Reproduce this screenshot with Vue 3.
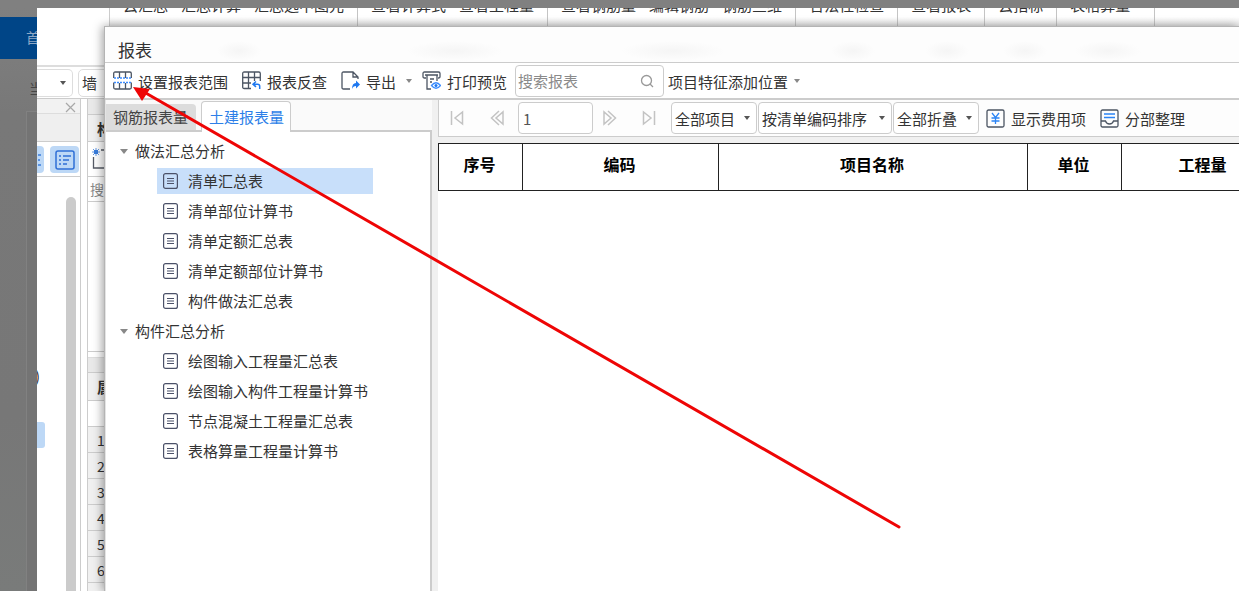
<script setup>
import { ref } from 'vue'

const ribbon = [
  ['云汇总', '汇总计算', '汇总选中图元'],
  ['查看计算式', '查看工程量'],
  ['查看钢筋量', '编辑钢筋', '钢筋三维'],
  ['合法性检查'],
  ['查看报表'],
  ['云指标'],
  ['表格算量'],
]
const tree = [
  { name: '做法汇总分析', items: ['清单汇总表', '清单部位计算书', '清单定额汇总表', '清单定额部位计算书', '构件做法汇总表'] },
  { name: '构件汇总分析', items: ['绘图输入工程量汇总表', '绘图输入构件工程量计算书', '节点混凝土工程量汇总表', '表格算量工程量计算书'] },
]
const selected = ref('清单汇总表')
const page = ref('1')
const keyword = ref('')
const rows = [1, 2, 3, 4, 5, 6, 7]
</script>

<template>
  <div class="screen">
    <aside class="backdrop">
      <div class="nav">首页</div>
      <div class="crumb">当前</div>
      <div class="card"></div>
    </aside>

    <main class="viewer">
      <div class="ribbon">
        <div v-for="(group, i) in ribbon" :key="i" class="ribbon-group">
          <span v-for="label in group" :key="label">{{ label }}</span>
        </div>
      </div>

      <div class="workspace">
        <div class="type-bar">
          <button class="type-box first" aria-label="楼层"><i class="caret"></i></button>
          <button class="type-box second">墙</button>
        </div>
        <div class="docks">
          <section class="dock">
            <div class="dock-head">
              <button class="close" aria-label="关闭">
                <svg width="11" height="11" viewBox="0 0 11 11"><path d="M1 1l9 9M10 1l-9 9" stroke="#a8a8a8" stroke-width="1.2" fill="none" /></svg>
              </button>
            </div>
            <div class="dock-gap"></div>
            <div class="dock-tools">
              <button class="chip cut" aria-label="图标视图">
                <svg width="6" height="20" viewBox="0 0 6 20"><path d="M0 5h3M0 10h2M0 15h3" stroke="#3b7ddd" stroke-width="1.5" /></svg>
              </button>
              <button class="chip" aria-label="列表视图">
                <svg width="20" height="20" viewBox="0 0 20 20" fill="none" stroke="#2f6fd6" stroke-width="1.5">
                  <rect x="1" y="1" width="18" height="18" rx="2" />
                  <path d="M4 6h2M8 6h8M4 10h2M8 10h6M4 14h2M8 14h4" />
                </svg>
              </button>
            </div>
            <div class="dock-list">
              <div class="list-col">
                <span class="paren">)</span>
                <span class="mark"></span>
              </div>
              <div class="scroll"></div>
            </div>
          </section>

          <section class="props">
            <div class="strip top"></div>
            <div class="cell head">构</div>
            <div class="cell tool">
              <svg width="16" height="22" viewBox="0 0 16 22" fill="none">
                <path d="M1.500 9v11H16M9 2h7" stroke="#555b66" stroke-width="1.3" />
                <rect x="2" y="2" width="4" height="4" fill="#3b7ddd" />
                <path d="M1 1l6 6M7 1L1 7M4 0v8M0 4h8" stroke="#3b7ddd" stroke-width=".8" />
              </svg>
            </div>
            <div class="cell find">搜</div>
            <div class="cell empty"></div>
            <div class="strip bottom"></div>
            <div class="cell attr">属</div>
            <div class="cell blank"></div>
            <div v-for="n in rows" :key="n" class="cell num">{{ n }}</div>
          </section>
        </div>
      </div>

      <section class="dialog" aria-labelledby="dialog-title">
        <h1 id="dialog-title" class="title">报表</h1>

        <div class="toolbar">
          <button class="tool-btn">
            <svg width="19" height="19" viewBox="0 0 19 19" fill="none">
              <path d="M.7 7V2.500Q.7 1 2.200 1h14.600q1.500 0 1.500 1.500V7M6.500 1v6M12.500 1v6M.7 11.500v5Q.7 18 2.200 18h14.600q1.500 0 1.500-1.500v-5M6.500 12v6M12.500 12v6" stroke="#4c5563" stroke-width="1.300" />
              <path d="M1 7h17M1 11.500h17" stroke="#3b8cff" stroke-width="1.300" stroke-dasharray="2 1" />
            </svg>
            <span>设置报表范围</span>
          </button>
          <button class="tool-btn">
            <svg width="19" height="19" viewBox="0 0 19 19" fill="none">
              <path d="M9 17.500H2.200Q.7 17.500.7 16V2.500Q.7 1 2.200 1h14.600q1.500 0 1.500 1.500V10M.7 6.500h17.600M.7 12H9M6.500 1v16.500M12.500 1v9" stroke="#4c5563" stroke-width="1.300" />
              <path d="M14 10.500l-3 2.700 3 2.700M11 13.200h4.500q2.200 0 2.200 2V18" stroke="#1e78f0" stroke-width="1.500" />
            </svg>
            <span>报表反查</span>
          </button>
          <button class="tool-btn">
            <svg width="19" height="19" viewBox="0 0 19 19" fill="none">
              <path d="M9 18H2.500Q1 18 1 16.500v-14Q1 1 2.500 1H12l5 5v2M12 1v5h5" stroke="#4c5563" stroke-width="1.300" />
              <path d="M11 18q0-6 4-6V9.500l4 4-4 4V15q-3 0-4 3z" fill="#1e78f0" />
            </svg>
            <span>导出</span>
            <i class="caret pale"></i>
          </button>
          <button class="tool-btn">
            <svg width="19" height="19" viewBox="0 0 19 19" fill="none">
              <path d="M4 7H2.500Q1 7 1 5.500v-3Q1 1 2.500 1h14Q18 1 18 2.500v3Q18 7 16.500 7H16M3 4h13M5 4v14h4M15 4v6M8 8h4M8 11h2" stroke="#4c5563" stroke-width="1.300" />
              <path d="M9.500 14.500q4.500-5.500 9 0-4.500 5.500-9 0z" stroke="#3b8cff" stroke-width="1.300" />
              <circle cx="14" cy="14.500" r="1.500" fill="#1e78f0" />
            </svg>
            <span>打印预览</span>
          </button>
          <label class="search">
            <input v-model="keyword" type="text" placeholder="搜索报表" aria-label="搜索报表" />
            <svg width="14" height="14" viewBox="0 0 14 14" fill="none" stroke="#999" stroke-width="1.300"><circle cx="6.500" cy="6.500" r="5" /><path d="M10 10l3 3" /></svg>
          </label>
          <button class="tool-btn feature"><span>项目特征添加位置</span><i class="caret pale"></i></button>
        </div>

        <div class="body">
          <aside class="side">
            <div class="tabs">
              <button class="tab">钢筋报表量</button>
              <button class="tab active">土建报表量</button>
            </div>
            <ul class="tree">
              <li v-for="g in tree" :key="g.name">
                <button class="branch"><i class="fold"></i>{{ g.name }}</button>
                <ul>
                  <li v-for="item in g.items" :key="item" class="entry">
                    <button class="leaf" :class="{ on: item === selected }" @click="selected = item">
                      <svg width="15" height="16" viewBox="0 0 15 16" fill="none" stroke="#4b5168" stroke-width="1.200">
                        <rect x=".6" y=".6" width="13.800" height="14.800" rx="2" />
                        <path d="M4 5.500h7M4 8h7M4 10.500h7" />
                      </svg>
                      {{ item }}
                    </button>
                  </li>
                </ul>
              </li>
            </ul>
          </aside>

          <div class="report">
            <div class="pager">
              <button class="step" aria-label="首页"><svg width="14" height="16" viewBox="0 0 14 16"><path d="M1.500 1v14M12.500 2v12L5 8z" /></svg></button>
              <button class="step" aria-label="上一页"><svg width="14" height="16" viewBox="0 0 14 16"><path d="M9 1L1.500 8 9 15M13 2v12L6 8z" /></svg></button>
              <input v-model="page" class="page" type="text" aria-label="页码" />
              <button class="step" aria-label="下一页"><svg width="14" height="16" viewBox="0 0 14 16"><path d="M5 1l7.500 7L5 15M1 2v12l7-6z" /></svg></button>
              <button class="step" aria-label="末页"><svg width="14" height="16" viewBox="0 0 14 16"><path d="M12.500 1v14M1.500 2v12L9 8z" /></svg></button>
              <div class="picks">
                <span class="pick"><select aria-label="项目"><option>全部项目</option></select><i class="caret"></i></span>
                <span class="pick wide"><select aria-label="排序"><option>按清单编码排序</option></select><i class="caret"></i></span>
                <span class="pick"><select aria-label="折叠"><option>全部折叠</option></select><i class="caret"></i></span>
              </div>
              <button class="tool-btn">
                <svg width="19" height="19" viewBox="0 0 19 19" fill="none">
                  <rect x="1" y="1" width="17" height="17" rx="1.500" stroke="#4c5563" stroke-width="1.300" />
                  <path d="M6 4l3.500 4.500L13 4M9.500 8.500V15M5.500 9h8M5.500 12h8" stroke="#2b84f5" stroke-width="1.300" />
                </svg>
                <span>显示费用项</span>
              </button>
              <button class="tool-btn">
                <svg width="19" height="19" viewBox="0 0 19 19" fill="none">
                  <rect x="1" y="1" width="17" height="17" rx="1.500" stroke="#4c5563" stroke-width="1.300" />
                  <path d="M1 12h4.500q1 3 4 3t4-3H18" stroke="#4c5563" stroke-width="1.300" />
                  <path d="M4 5h11M4 8.500h11" stroke="#2b84f5" stroke-width="1.300" />
                </svg>
                <span>分部整理</span>
              </button>
            </div>
            <div class="sheet">
              <table>
                <colgroup><col class="c1" /><col class="c2" /><col class="c3" /><col class="c4" /><col class="c5" /></colgroup>
                <thead>
                  <tr><th>序号</th><th>编码</th><th>项目名称</th><th>单位</th><th>工程量</th></tr>
                </thead>
              </table>
            </div>
          </div>
        </div>
      </section>
    </main>

    <svg class="arrow" width="780" height="460" viewBox="0 0 780 460">
      <path d="M15 11L770 446" stroke="#ee0505" stroke-width="3" stroke-linecap="round" />
      <path d="M4 6L21 8 13 20z" fill="#ee0505" />
    </svg>
  </div>
</template>

<style>
body { margin: 0; overflow: hidden; }
</style>

<style scoped>
* { box-sizing: border-box; }
.screen {
  position: relative;
  display: grid;
  grid-template-columns: 37px 1fr;
  height: 100vh;
  padding-top: 8px;
  overflow: hidden;
  background: #808080;
  color: #333;
  font: 15px/20px "Noto Sans CJK SC", "Liberation Sans", sans-serif;
}
button, input, select { font: inherit; color: inherit; margin: 0; padding: 0; border: 0; background: none; white-space: nowrap; }
svg { display: block; flex: none; }
ul { list-style: none; margin: 0; padding: 0; }

.backdrop { display: flex; flex-direction: column; overflow: hidden; white-space: nowrap; background: linear-gradient(#808080, #787878 18%, #777 70%, #797b7a); }
.nav { margin-top: 9px; height: 42px; padding-left: 26px; line-height: 40px; font-size: 14px; color: #8fa9c6; background: #004587; }
.crumb { padding: 19px 0 0 29px; font-size: 14px; color: #454545; }
.card { flex: 1; margin: 13px 0 0 26px; border: solid #818181; border-width: 1px 0 0 1px; background: #747474; }

.viewer { position: relative; display: flex; flex-direction: column; min-width: 0; overflow: hidden; background: #fff; }
.ribbon { display: flex; height: 18px; margin-left: 72px; border-left: 1px solid #ccc; background: linear-gradient(#fff 50%, #e6e6e6); white-space: nowrap; flex: none; }
.ribbon-group { display: flex; align-items: flex-end; gap: 13px; height: 18px; padding: 0 13px 11px; border-right: 1px solid #c4c4c4; overflow: hidden; }
.ribbon-group:last-child { padding-right: 24px; }
.ribbon-group span { flex: none; }

.workspace { flex: 1; display: flex; flex-direction: column; width: 67px; margin-top: 39px; border-top: 2px solid #ddd; overflow: hidden; }
.type-bar { display: flex; gap: 5px; height: 31px; padding: 2px 0; }
.type-box { flex: none; height: 28px; border: 1px solid #ddd; background: #fff; }
.type-box.first { width: 36px; border-left: 0; border-radius: 0 5px 5px 0; display: flex; align-items: center; justify-content: flex-end; padding-right: 6px; }
.type-box.second { width: 60px; border-radius: 5px; padding-left: 3px; text-align: left; }
.caret { display: block; flex: none; width: 0; height: 0; border: solid transparent; border-width: 4px 3px 0; border-top-color: #555; }
.caret.pale { border-top-color: #888; }
.docks { flex: 1; display: flex; gap: 6px; min-height: 0; border-top: 1px solid #ccc; }
.dock { display: flex; flex-direction: column; width: 44px; border-right: 1px solid #ccc; flex: none; }
.dock-head { display: flex; justify-content: flex-end; height: 15px; padding: 3px 4px 0; background: #f2f2f2; border-bottom: 1px solid #ddd; }
.dock-gap { height: 28px; background: #efefef; border-bottom: 1px solid #ccc; }
.dock-tools { display: flex; gap: 6px; height: 35px; padding: 4px 0; border-bottom: 1px solid #ccc; }
.chip { display: flex; align-items: center; justify-content: center; width: 29px; height: 27px; border-radius: 4px; background: #bdd8f6; }
.chip.cut { width: 7px; border-radius: 0 4px 4px 0; }
.dock-list { flex: 1; display: flex; justify-content: space-between; padding: 20px 4px 0 0; }
.list-col { width: 8px; padding-top: 168px; overflow: hidden; }
.paren { display: block; margin-left: -2px; line-height: 22px; }
.mark { display: block; height: 26px; margin-top: 35px; border-radius: 0 3px 3px 0; background: #bdd8f6; }
.scroll { width: 10px; border-radius: 5px 5px 0 0; background: #cbcbcb; }
.props { display: flex; flex-direction: column; width: 60px; border-left: 1px solid #ccc; flex: none; }
.strip { flex: none; background: #e9e9e9; border-bottom: 1px solid #ccc; }
.strip.top { height: 16px; }
.strip.bottom { height: 16px; margin-top: 5px; border-top: 1px solid #ddd; }
.cell { flex: none; border-bottom: 1px solid #ccc; background: #fff; padding-left: 9px; }
.head { height: 27px; line-height: 27px; font-weight: 700; background: #efefef; }
.tool { height: 35px; padding: 6px 0 0 4px; }
.find { height: 25px; padding-left: 2px; line-height: 25px; font-size: 14px; color: #888; }
.empty { height: 150px; }
.attr { height: 28px; line-height: 28px; font-weight: 700; background: #f0f0f0; }
.blank { height: 26px; }
.num { height: 26px; line-height: 27px; font-size: 14px; background: #f0f0f0; }

.dialog {
  position: absolute;
  inset: 18px 0 0 67px;
  display: flex;
  flex-direction: column;
  border: solid #b4b4b4;
  border-width: 1px 0 0 1px;
  background: #fff;
  box-shadow: -2px 0 9px rgba(0, 0, 0, .35);
}
.title {
  flex: none;
  height: 36px;
  margin: 0;
  padding: 5px 13px 0;
  border-bottom: 1px solid #ccc;
  font-size: 17px;
  line-height: 36px;
  font-weight: 400;
  background:
    radial-gradient(closest-side, #f5f5f5, transparent) 112px 14px / 44px 20px no-repeat,
    radial-gradient(closest-side, #f5f5f5, transparent) 302px 14px / 96px 20px no-repeat,
    radial-gradient(closest-side, #f5f5f5, transparent) 516px 14px / 104px 20px no-repeat,
    radial-gradient(closest-side, #f5f5f5, transparent) 726px 14px / 44px 20px no-repeat,
    radial-gradient(closest-side, #f5f5f5, transparent) 820px 14px / 44px 20px no-repeat,
    radial-gradient(closest-side, #f5f5f5, transparent) 898px 14px / 44px 20px no-repeat,
    radial-gradient(closest-side, #f5f5f5, transparent) 970px 14px / 66px 20px no-repeat,
    #fdfdfd;
}
.toolbar { flex: none; display: flex; align-items: center; height: 37px; padding-left: 8px; border-bottom: 2px solid #ccc; white-space: nowrap; }
.tool-btn { display: flex; align-items: center; gap: 6px; flex: none; margin-right: 14px; }
.tool-btn span { padding-top: 2px; }
.toolbar .tool-btn > .caret { margin-left: 4px; margin-right: -4px; }
.toolbar .tool-btn:nth-child(4) { margin-right: 8px; }
.search { display: flex; align-items: center; width: 149px; height: 32px; margin-right: 4px; padding: 0 9px 0 2px; border: 1px solid #ccc; border-radius: 4px; }
.search input { flex: 1; min-width: 0; outline: 0; }
.search input::placeholder { color: #8a8a8a; opacity: 1; }
.toolbar .feature > .caret { margin-left: 0; }

.body { flex: 1; display: flex; min-height: 0; background: #f0f0f0; }
.side { display: flex; flex-direction: column; flex: none; width: 327px; border-left: 1px solid #e4e4e4; background: #fafafa; }
.tabs { display: flex; align-items: flex-end; gap: 5px; height: 32px; border-bottom: 2px solid #ccc; }
.tab { height: 26px; width: 90px; padding: 0 7px; border-radius: 0 4px 0 0; background: #dcdcdc; text-align: left; color: #444; }
.tab.active { height: 31px; margin-bottom: -2px; border: 1px solid #ccc; border-bottom: 0; border-radius: 4px 4px 0 0; background: #fff; color: #2d7fe8; }
.tree { flex: 1; padding-top: 4px; border-right: 2px solid #ccc; background: #fff; }
.branch { display: flex; align-items: center; gap: 7px; height: 30px; padding-left: 14px; }
.fold { border: solid transparent; border-width: 5px 4px 0; border-top-color: #888; }
.entry { display: flex; }
.leaf { display: flex; align-items: center; gap: 10px; width: 216px; height: 26px; margin: 2px 0 2px 51px; padding-left: 6px; }
.leaf.on { background: #c8dffa; }

.report { flex: 1; display: flex; flex-direction: column; min-width: 0; margin-left: 6px; }
.pager { display: flex; align-items: center; flex: none; height: 37px; padding-left: 11px; border: 1px solid #ccc; border-width: 0 0 1px 1px; background: #fdfdfd; white-space: nowrap; overflow: hidden; }
.step { flex: none; margin-right: 25px; }
.step path { fill: none; stroke: #c3c3c3; stroke-width: 1.5; }
.page { flex: none; width: 75px; height: 32px; margin: 0 10px 0 -11px; padding: 0 4px; border: 1px solid #ccc; border-radius: 4px; background: #fff; color: #555; outline: 0; }
.step:nth-child(2) { margin-left: 1px; }
.step:nth-child(5) { margin-right: 15px; }
.picks { display: flex; gap: 1px; margin-right: 7px; flex: none; }
.pick { position: relative; width: 86px; }
.pick.wide { width: 134px; }
.pick select { appearance: none; width: 100%; height: 32px; padding: 1px 14px 0 3px; border: 1px solid #ccc; border-radius: 4px; background: #fff; }
.pick .caret { position: absolute; top: 14px; right: 7px; pointer-events: none; }
.sheet { flex: 1; margin-top: 6px; overflow: hidden; background: #fff; }
table { table-layout: fixed; width: 848px; border-collapse: collapse; color: #000; }
th { height: 47px; padding: 0 2px 6px 0; border: 1px solid #222; font-size: 16px; font-weight: 700; }
.c1 { width: 84px; }
.c2 { width: 196px; }
.c3 { width: 309px; }
.c4 { width: 94px; }
.c5 { width: 164px; }

.arrow { position: absolute; left: 129px; top: 81px; pointer-events: none; }
</style>
